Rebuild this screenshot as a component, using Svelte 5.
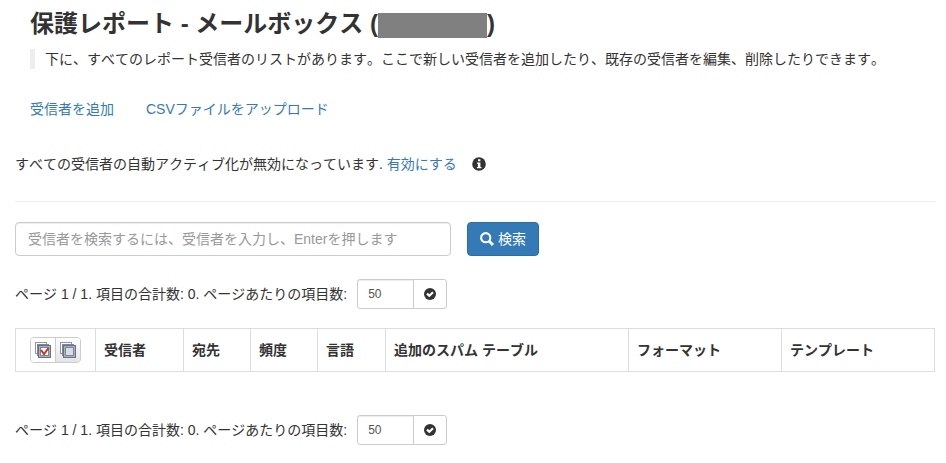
<script>
  let query = $state('');
  let perPage = $state({ top: '50', bottom: '50' });

  const columns = [
    { label: '受信者', share: 88 },
    { label: '宛先', share: 67 },
    { label: '頻度', share: 67 },
    { label: '言語', share: 68 },
    { label: '追加のスパム テーブル', share: 243 },
    { label: 'フォーマット', share: 153 },
    { label: 'テンプレート', share: 153 }
  ];
  const total = 919;
  const width = (share) => `${(share / total) * 100}%`;
</script>

{#snippet pager(id)}
  <form class="pager" onsubmit={(e) => e.preventDefault()}>
    <label for="per-page-{id}">ページ 1 / 1. 項目の合計数: 0. ページあたりの項目数:</label>
    <div class="group">
      <input id="per-page-{id}" type="text" bind:value={perPage[id]} />
      <button type="submit" aria-label="適用">
        <svg width="12" height="12" viewBox="0 0 12 12" aria-hidden="true">
          <circle cx="6" cy="6" r="6" fill="#333" />
          <path d="M3 5.6 5.3 7.8 9 4.3" fill="none" stroke="#fff" stroke-width="2.2" />
        </svg>
      </button>
    </div>
  </form>
{/snippet}

{#snippet stack(checked)}
  <svg width="16" height="16" viewBox="0 0 16 16" aria-hidden="true">
    <rect x="0.5" y="0.5" width="11" height="11" fill="#fff" stroke="#8d97aa" />
    <rect x="2.5" y="2.5" width="11" height="11" fill="#fff" stroke="#7d879c" />
    <rect x="3.5" y="3.5" width="12" height="12" fill="#a9b0be" stroke="#667087" />
    <rect x="5.5" y="5.5" width="8" height="8" fill={checked ? '#fff' : '#dcdde0'} stroke="#7d8699" />
    {#if checked}
      <path d="M6 8 9 12 13.5 6" fill="none" stroke="#d0301c" stroke-width="2" />
    {/if}
  </svg>
{/snippet}

<main>
  <header>
    <h1>保護レポート - メールボックス (<span class="redacted"></span>)</h1>
    <p class="lead">下に、すべてのレポート受信者のリストがあります。ここで新しい受信者を追加したり、既存の受信者を編集、削除したりできます。</p>
    <nav>
      <a href="#add">受信者を追加</a>
      <a href="#upload">CSVファイルをアップロード</a>
    </nav>
  </header>

  <p class="status">
    <span>すべての受信者の自動アクティブ化が無効になっています. <a href="#enable">有効にする</a></span>
    <svg width="14" height="14" viewBox="0 0 14 14" aria-hidden="true">
      <circle cx="7" cy="7" r="6.8" fill="#333" />
      <path d="M6 2.2h2.4v2H6zM5 5.4h3.4v4.5h1v1.4H4.9V9.9h1V6.8H5z" fill="#fff" />
    </svg>
  </p>

  <hr />

  <form class="search" onsubmit={(e) => e.preventDefault()}>
    <input
      type="text"
      aria-label="受信者を検索"
      placeholder="受信者を検索するには、受信者を入力し、Enterを押します"
      bind:value={query}
    />
    <button type="submit">
      <svg width="14" height="14" viewBox="0 0 14 14" aria-hidden="true">
        <circle cx="5.7" cy="5.7" r="4.6" fill="none" stroke="#fff" stroke-width="2.1" />
        <path d="M9 9 13 13" stroke="#fff" stroke-width="2.8" />
      </svg>
      検索
    </button>
  </form>

  {@render pager('top')}

  <table>
    <thead>
      <tr>
        <th class="select" style:width={width(80)}>
          <div class="toggle">
            <button type="button" aria-label="すべて選択">{@render stack(true)}</button>
            <button type="button" aria-label="選択を解除">{@render stack(false)}</button>
          </div>
        </th>
        {#each columns as column}
          <th scope="col" style:width={width(column.share)}>{column.label}</th>
        {/each}
      </tr>
    </thead>
  </table>

  {@render pager('bottom')}
</main>

<style>
  :global(body) {
    background: #fff;
  }
  main,
  input,
  button {
    font-family: 'Liberation Sans', 'Noto Sans CJK JP', sans-serif;
    font-size: 14px;
    font-kerning: none;
    line-height: 20px;
    color: #333;
  }
  main,
  main * {
    box-sizing: border-box;
  }
  main {
    padding: 9px 11px 18px 15px;
  }
  a {
    color: #337ab7;
    text-decoration: none;
  }
  header {
    padding-left: 15px;
  }
  h1 {
    display: flex;
    align-items: center;
    margin: 0 0 11px;
    font-size: 24px;
    line-height: 26px;
    white-space: pre;
  }
  .redacted {
    width: 109px;
    height: 25px;
    margin-top: 4px;
    background: #808080;
  }
  .lead {
    margin: 0;
    padding-left: 10px;
    border-left: 5px solid #eee;
  }
  nav {
    display: flex;
    gap: 32px;
    margin-top: 30px;
  }
  .status {
    display: flex;
    align-items: center;
    gap: 15px;
    margin: 35px 0 0;
  }
  hr {
    margin: 27px 0 20px;
    border: 0;
    border-top: 1px solid #eee;
  }
  input {
    border: 1px solid #ccc;
    background: #fff;
    box-shadow: inset 0 1px 1px rgba(0, 0, 0, 0.075);
  }
  .search {
    display: flex;
    gap: 16px;
  }
  .search input {
    width: 47.4%;
    height: 34px;
    padding: 6px 12px;
    border-radius: 4px;
  }
  .search input::placeholder {
    color: #999;
    opacity: 1;
  }
  .search button {
    display: flex;
    align-items: center;
    gap: 4px;
    height: 34px;
    padding: 6px 12px;
    border: 1px solid #2e6da4;
    border-radius: 4px;
    background: #337ab7;
    color: #fff;
  }
  .pager {
    display: flex;
    align-items: center;
    gap: 10px;
    margin-top: 23px;
  }
  .group {
    display: flex;
  }
  .group input {
    width: 57px;
    height: 30px;
    padding: 5px 10px;
    border-radius: 3px 0 0 3px;
    font-size: 12px;
    color: #555;
  }
  .group button {
    display: grid;
    place-items: center;
    width: 34px;
    height: 30px;
    margin-left: -1px;
    padding: 0;
    border: 1px solid #ccc;
    border-radius: 0 3px 3px 0;
    background: #fff;
  }
  table {
    width: 100%;
    margin: 19px 0 43px;
    border-collapse: collapse;
    table-layout: fixed;
  }
  th {
    height: 43px;
    padding: 8px;
    border: 1px solid #ddd;
    text-align: left;
    white-space: nowrap;
  }
  .select {
    padding: 0 14px;
  }
  .toggle {
    display: flex;
    width: 51px;
    height: 26px;
    border: 1px solid #ccc;
    border-radius: 4px;
    overflow: hidden;
  }
  .toggle button {
    display: grid;
    flex: 1;
    place-items: center;
    padding: 0;
    border: 0;
    background: #fff;
  }
  .toggle button + button {
    border-left: 1px solid #ccc;
    background: linear-gradient(#fff, #e4e4e4);
  }
</style>
